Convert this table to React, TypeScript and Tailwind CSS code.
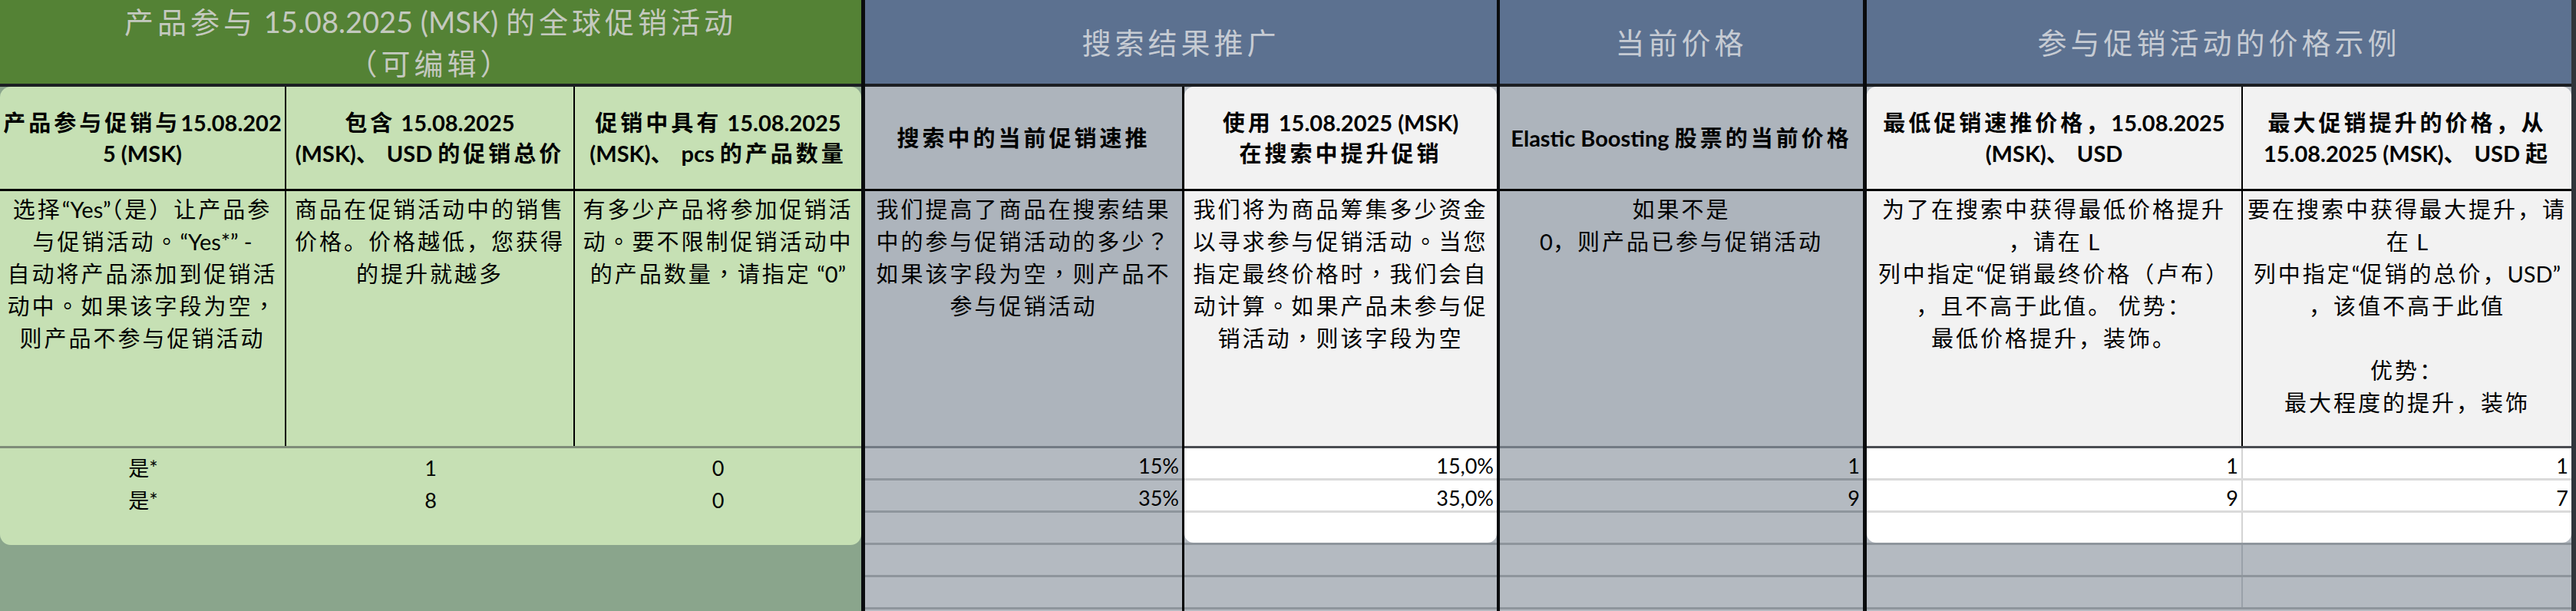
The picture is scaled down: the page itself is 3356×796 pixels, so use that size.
import type { ReactNode } from "react";

// CJK runs keep the cell's letter spacing, latin runs go back to normal spacing
const CJK_SPLIT = /([^\u3000-\u303f\u3400-\u9fff\uff00-\uffef]+)/;

function Mixed({ text }: { text: string }) {
  if (!text) return <>{"\u00a0"}</>;
  return (
    <>
      {text.split(CJK_SPLIT).map((part, i) =>
        i % 2 === 1 ? (
          <span key={i} className="tracking-normal">
            {part}
          </span>
        ) : (
          part
        )
      )}
    </>
  );
}

function Lines({ lines }: { lines: string[] }) {
  return (
    <>
      {lines.map((l, i) => (
        <div key={i} className="whitespace-nowrap">
          <Mixed text={l} />
        </div>
      ))}
    </>
  );
}

function GroupHeader({ lines, className }: { lines: string[]; className: string }) {
  return (
    <div
      className={`flex h-[113px] shrink-0 flex-col items-center justify-center border-b-4 border-[#1c1f23] text-[38px] leading-[54px] tracking-[5px] ${className}`}
    >
      <Lines lines={lines} />
    </div>
  );
}

function SubCell({ lines, className = "" }: { lines: string[]; className?: string }) {
  return (
    <div
      className={`flex flex-col items-center justify-center text-center text-[29px] font-bold leading-[40px] tracking-[4px] text-black ${className}`}
    >
      <Lines lines={lines} />
    </div>
  );
}

function DescCell({ lines, tc, className = "" }: { lines: string[]; tc?: boolean; className?: string }) {
  return (
    <div
      className={`flex flex-col items-center pt-[3px] text-center text-[29px] leading-[42px] tracking-[3px] text-black ${
        tc ? "font-['Lato','Noto_Sans_CJK_TC',sans-serif]" : ""
      } ${className}`}
    >
      <Lines lines={lines} />
    </div>
  );
}

function DataCell({ children, center, className = "" }: { children?: ReactNode; center?: boolean; className?: string }) {
  return (
    <div
      className={`flex items-end pb-[3px] text-[27px] leading-[27px] text-black ${
        center ? "justify-center" : "justify-end pr-1"
      } ${className}`}
    >
      {children}
    </div>
  );
}

function GrayColumn({ sub, desc, data, tc, className = "" }: { sub: string[]; desc: string[]; data: string[]; tc?: boolean; className?: string }) {
  return (
    <div className={`flex flex-col bg-[#b4bac1] ${className}`}>
      <SubCell lines={sub} className="h-[136px] border-b-[3px] border-black bg-[#adb4bc]" />
      <DescCell lines={desc} tc={tc} className="h-[335px] border-b-[3px] border-[#727a83] bg-[#adb4bc]" />
      {data.map((v, i) => (
        <DataCell key={i} className="h-[42px] border-b-[3px] border-[#8e959c]">
          {v}
        </DataCell>
      ))}
    </div>
  );
}

type PanelCol = { w: string; sub: string[]; desc: string[]; data: string[]; tc?: boolean };

function PanelGroup({ cols }: { cols: PanelCol[] }) {
  const last = cols.length - 1;
  return (
    <div className="flex flex-1 flex-col bg-[#b4bac1]">
      <div className="overflow-hidden rounded-[12px]">
        <div className="flex h-[136px] border-b-[3px] border-black bg-[#f2f2f2]">
          {cols.map((c, i) => (
            <SubCell key={i} lines={c.sub} className={`${c.w} ${i < last ? "border-r-2 border-black" : ""}`} />
          ))}
        </div>
        <div className="flex h-[335px] border-b-[3px] border-[#4a4d52] bg-[#f2f2f2]">
          {cols.map((c, i) => (
            <DescCell key={i} lines={c.desc} tc={c.tc} className={`${c.w} ${i < last ? "border-r-2 border-black" : ""}`} />
          ))}
        </div>
        {[0, 1, 2].map((r) => (
          <div key={r} className={`flex bg-white ${r < 2 ? "h-[42px] border-b-[3px] border-[#dadada]" : "h-[39px]"}`}>
            {cols.map((c, i) => (
              <DataCell key={i} className={`${c.w} ${i < last ? "border-r-2 border-[#d4d4d4]" : ""}`}>
                {c.data[r]}
              </DataCell>
            ))}
          </div>
        ))}
      </div>
      <div className="h-[3px] bg-[#8e959c]" />
      {[3, 4].map((r) => (
        <div key={r} className="flex h-[42px] border-b-[3px] border-[#8e959c]">
          {cols.map((c, i) => (
            <DataCell key={i} className={`${c.w} ${i < last ? "border-r-2 border-[#9aa1a9]" : ""}`}>
              {c.data[r]}
            </DataCell>
          ))}
        </div>
      ))}
    </div>
  );
}

const greenRows = [
  ["是*", "1", "0"],
  ["是*", "8", "0"],
  ["", "", ""],
];

export default function App() {
  return (
    <div className="flex h-[796px] w-[3356px] overflow-hidden bg-[#0a0c0e] font-['Lato','Noto_Sans_CJK_SC',sans-serif]">
      {/* editable global promo */}
      <div className="flex w-[1122px] shrink-0 flex-col bg-[#8aa58c]">
        <GroupHeader
          className="bg-[#548235] text-[#c4c9bf]"
          lines={["产品参与 15.08.2025 (MSK) 的全球促销活动", "（可编辑）"]}
        />
        <div className="overflow-hidden rounded-[14px] bg-[#c6e0b4]">
          <div className="flex h-[136px] border-b-[3px] border-black">
            <SubCell className="w-[373px] border-r-2 border-black" lines={["产品参与促销与15.08.202", "5 (MSK)"]} />
            <SubCell className="w-[376px] border-r-2 border-black" lines={["包含 15.08.2025", "(MSK)、 USD 的促销总价"]} />
            <SubCell className="flex-1" lines={["促销中具有 15.08.2025", "(MSK)、 pcs 的产品数量"]} />
          </div>
          <div className="flex h-[335px] border-b-[3px] border-[#7f8d79]">
            <DescCell
              tc
              className="w-[373px] border-r-2 border-black"
              lines={["选择“Yes”（是）让产品参", "与促销活动。“Yes*” -", "自动将产品添加到促销活", "动中。如果该字段为空，", "则产品不参与促销活动"]}
            />
            <DescCell
              className="w-[376px] border-r-2 border-black"
              lines={["商品在促销活动中的销售", "价格。价格越低，您获得", "的提升就越多"]}
            />
            <DescCell tc className="flex-1" lines={["有多少产品将参加促销活", "动。要不限制促销活动中", "的产品数量，请指定 “0”"]} />
          </div>
          {greenRows.map((row, r) => (
            <div key={r} className="flex h-[42px]">
              <DataCell center className="w-[373px]">{row[0]}</DataCell>
              <DataCell center className="w-[376px]">{row[1]}</DataCell>
              <DataCell center className="flex-1">{row[2]}</DataCell>
            </div>
          ))}
        </div>
      </div>

      <div className="w-[5px] shrink-0 bg-[#0a0c0e]" />

      {/* search promotion */}
      <div className="flex w-[823px] shrink-0 flex-col">
        <GroupHeader className="bg-[#5c7190] text-[#c6cbd3]" lines={["搜索结果推广"]} />
        <div className="flex flex-1">
          <GrayColumn
            tc
            className="w-[413px]"
            sub={["搜索中的当前促销速推"]}
            desc={["我们提高了商品在搜索结果", "中的参与促销活动的多少？", "如果该字段为空，则产品不", "参与促销活动"]}
            data={["15%", "35%", "", "", ""]}
          />
          <div className="w-[3px] bg-black" />
          <PanelGroup
            cols={[
              {
                w: "flex-1",
                tc: true,
                sub: ["使用 15.08.2025 (MSK)", "在搜索中提升促销"],
                desc: ["我们将为商品筹集多少资金", "以寻求参与促销活动。当您", "指定最终价格时，我们会自", "动计算。如果产品未参与促", "销活动，则该字段为空"],
                data: ["15,0%", "35,0%", "", "", ""],
              },
            ]}
          />
        </div>
      </div>

      <div className="w-[4px] shrink-0 bg-[#0a0c0e]" />

      {/* current price */}
      <div className="flex w-[473px] shrink-0 flex-col">
        <GroupHeader className="bg-[#5c7190] text-[#c6cbd3]" lines={["当前价格"]} />
        <GrayColumn
          className="flex-1"
          sub={["Elastic Boosting 股票的当前价格"]}
          desc={["如果不是", "0，则产品已参与促销活动"]}
          data={["1", "9", "", "", ""]}
        />
      </div>

      <div className="w-[5px] shrink-0 bg-[#0a0c0e]" />

      {/* price examples */}
      <div className="flex w-[918px] shrink-0 flex-col">
        <GroupHeader className="bg-[#5c7190] text-[#c6cbd3]" lines={["参与促销活动的价格示例"]} />
        <PanelGroup
          cols={[
            {
              w: "w-[490px]",
              sub: ["最低促销速推价格，15.08.2025", "(MSK)、 USD"],
              desc: ["为了在搜索中获得最低价格提升", "，请在 L", "列中指定“促销最终价格（卢布）", "，且不高于此值。 优势：", "最低价格提升，装饰。"],
              data: ["1", "9", "", "", ""],
            },
            {
              w: "flex-1",
              sub: ["最大促销提升的价格，从", "15.08.2025 (MSK)、 USD 起"],
              desc: ["要在搜索中获得最大提升，请", "在 L", "列中指定“促销的总价，USD”", "，该值不高于此值", "", "优势：", "最大程度的提升，装饰"],
              data: ["1", "7", "", "", ""],
            },
          ]}
        />
      </div>

      <div className="w-[6px] shrink-0 bg-[#30353b]" />
    </div>
  );
}
